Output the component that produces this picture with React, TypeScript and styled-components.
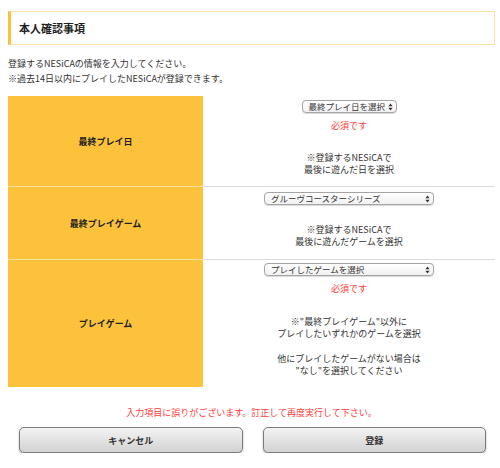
import React from "react";
import styled, { createGlobalStyle } from "styled-components";

const Global = createGlobalStyle`
  html, body { margin: 0; padding: 0; background: #fff; }
  body { font-family: "Noto Sans CJK JP", "Noto Sans", sans-serif; color: #333; }
`;

const Page = styled.div`
  width: 487px;
  padding: 11px 5px 0 8px;
`;

const Header = styled.div`
  height: 32px;
  border: 1px solid #fde2a0;
  border-left: 3px solid #fbc13a;
  display: flex;
  align-items: center;
  padding-left: 8px;
`;

const Title = styled.h1`
  margin: 0;
  font-size: 11px;
  font-weight: 700;
  color: #222;
`;

const Intro = styled.p`
  margin: 11px 0 0;
  font-size: 9px;
  line-height: 15px;
  color: #333;
`;

const Table = styled.div`
  margin-top: 10px;
  display: grid;
  grid-template-columns: 195px 1fr;
`;

const Label = styled.div<{ $h: number; $last?: boolean }>`
  height: ${(p) => p.$h}px;
  background: #fdc23c;
  display: flex;
  align-items: center;
  justify-content: center;
  font-size: 9px;
  font-weight: 700;
  color: #222;
  border-bottom: ${(p) => (p.$last ? "none" : "1px solid #fde3a3")};
`;

const Cell = styled.div<{ $h: number; $pt: number; $last?: boolean }>`
  height: ${(p) => p.$h}px;
  box-sizing: border-box;
  padding-top: ${(p) => p.$pt}px;
  display: flex;
  flex-direction: column;
  align-items: center;
  border-bottom: ${(p) => (p.$last ? "none" : "1px solid #dcdcdc")};
`;

const Select = styled.div<{ $w: number }>`
  width: ${(p) => p.$w}px;
  height: 13px;
  box-sizing: border-box;
  border: 1px solid #a4a4a4;
  border-radius: 4px;
  background: linear-gradient(#ffffff, #f1f1f1);
  display: flex;
  align-items: center;
  justify-content: space-between;
  padding: 0 3px 0 6px;
  font-size: 8.5px;
  line-height: 11px;
  white-space: nowrap;
  overflow: hidden;
  color: #333;
  box-shadow: 0 0.5px 1px rgba(0, 0, 0, 0.15);
`;

const Required = styled.div`
  margin-top: 7px;
  font-size: 9px;
  line-height: 12px;
  color: #ff3b3b;
`;

const Note = styled.p<{ $mt: number }>`
  margin: ${(p) => p.$mt}px 0 0;
  font-size: 9px;
  line-height: 12px;
  text-align: center;
  color: #333;
`;

const Error = styled.div`
  margin-top: 20px;
  text-align: center;
  font-size: 9px;
  line-height: 12px;
  color: #ff3b3b;
`;

const Buttons = styled.div`
  margin-top: 8px;
  display: grid;
  grid-template-columns: 1fr 1fr;
  gap: 20px;
  padding: 0 9px 0 11px;
`;

const Button = styled.button`
  height: 26px;
  border: 1px solid #7c7c7c;
  border-radius: 5px;
  background: linear-gradient(#f3f3f3, #d2d2d2);
  box-shadow: 0 1px 2px rgba(0, 0, 0, 0.35);
  font-family: "Noto Sans CJK JP", "Noto Sans", sans-serif;
  font-size: 9px;
  font-weight: 700;
  color: #333;
  padding: 0;
`;

const Arrows = () => (
  <svg width="5" height="8" viewBox="0 0 5 8" style={{ flexShrink: 0 }}>
    <path d="M2.5 0.5 L4.6 3.2 L0.4 3.2 Z" fill="#333" />
    <path d="M2.5 7.5 L4.6 4.8 L0.4 4.8 Z" fill="#333" />
  </svg>
);

export default function App() {
  return (
    <>
      <Global />
      <Page>
        <Header>
          <Title>本人確認事項</Title>
        </Header>
        <Intro>
          登録するNESiCAの情報を入力してください。
          <br />
          ※過去14日以内にプレイしたNESiCAが登録できます。
        </Intro>
        <Table>
          <Label $h={90}>最終プレイ日</Label>
          <Cell $h={91} $pt={4}>
            <Select $w={95}>
              <span>最終プレイ日を選択</span>
              <Arrows />
            </Select>
            <Required>必須です</Required>
            <Note $mt={20}>
              ※登録するNESiCAで
              <br />
              最後に遊んだ日を選択
            </Note>
          </Cell>
          <Label $h={72}>最終プレイゲーム</Label>
          <Cell $h={73} $pt={5}>
            <Select $w={170}>
              <span>グルーヴコースターシリーズ</span>
              <Arrows />
            </Select>
            <Note $mt={19}>
              ※登録するNESiCAで
              <br />
              最後に遊んだゲームを選択
            </Note>
          </Cell>
          <Label $h={127} $last>
            プレイゲーム
          </Label>
          <Cell $h={127} $pt={3} $last>
            <Select $w={170}>
              <span>プレイしたゲームを選択</span>
              <Arrows />
            </Select>
            <Required>必須です</Required>
            <Note $mt={21}>
              ※"最終プレイゲーム"以外に
              <br />
              プレイしたいずれかのゲームを選択
            </Note>
            <Note $mt={13}>
              他にプレイしたゲームがない場合は
              <br />
              "なし"を選択してください
            </Note>
          </Cell>
        </Table>
        <Error>入力項目に誤りがございます。訂正して再度実行して下さい。</Error>
        <Buttons>
          <Button>キャンセル</Button>
          <Button>登録</Button>
        </Buttons>
      </Page>
    </>
  );
}
